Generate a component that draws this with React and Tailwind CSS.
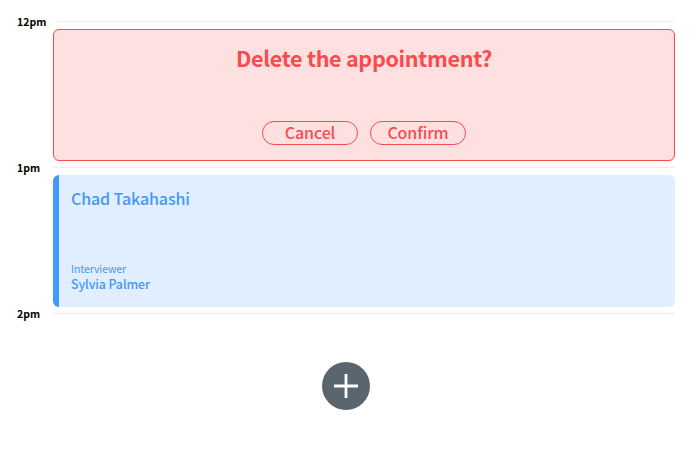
function HourMark({ label, lineClass }) {
  return (
    <div className="flex h-[14px] items-start">
      <span className="flex h-[14px] shrink-0 items-center text-[10.5px] font-bold leading-[14px] text-black">
        {label}
      </span>
      <span className={`ml-auto mt-[6px] h-px shrink-0 bg-[#eeeeee] ${lineClass}`} />
    </div>
  );
}

function PillButton({ children }) {
  return (
    <button
      type="button"
      className="flex h-6 w-24 items-center justify-center rounded-full border border-[#f94a4e] pb-[2px] text-[16px] font-medium leading-none tracking-[-0.1px]"
    >
      {children}
    </button>
  );
}

export default function App() {
  return (
    <main className="flex h-[450px] w-[698px] flex-col bg-white pl-[17px] pr-[23px] pt-[15px] font-['Noto_Sans_CJK_SC','Source_Sans_Pro',sans-serif]">
      <HourMark label="12pm" lineClass="w-[617px]" />
      <section className="ml-9 flex h-[132px] flex-col items-center rounded-md border border-[#f94a4e] bg-[#fee0e0] text-[#f94a4e]">
        <h1 className="mt-[12px] whitespace-nowrap text-[21.5px] font-bold leading-8 tracking-[-0.29px]">Delete the appointment?</h1>
        <div className="mb-[15px] mt-auto flex gap-3">
          <PillButton>Cancel</PillButton>
          <PillButton>Confirm</PillButton>
        </div>
      </section>
      <HourMark label="1pm" lineClass="w-[623px]" />
      <article className="ml-9 flex h-[132px] flex-col rounded-md border-l-[6px] border-[#4299fa] bg-[#e0eeff] pl-3 text-[#4299fa]">
        <h2 className="mt-[11px] text-[16px] font-medium leading-6 tracking-[-0.12px]">Chad Takahashi</h2>
        <h4 className="mt-auto text-[10.5px] font-normal leading-[16px] tracking-[-0.1px]">Interviewer</h4>
        <h3 className="mb-[15px] text-[12.4px] font-medium leading-[15px] tracking-[-0.1px]">Sylvia Palmer</h3>
      </article>
      <HourMark label="2pm" lineClass="w-[623px]" />
      <button
        type="button"
        aria-label="Add"
        className="ml-[305px] mt-[41px] flex size-12 items-center justify-center rounded-full bg-[#5a656e]"
      >
        <svg viewBox="0 0 24 24" className="size-6" stroke="#fff" strokeWidth="2.8">
          <path d="M12 0v24M0 12h24" />
        </svg>
      </button>
    </main>
  );
}
